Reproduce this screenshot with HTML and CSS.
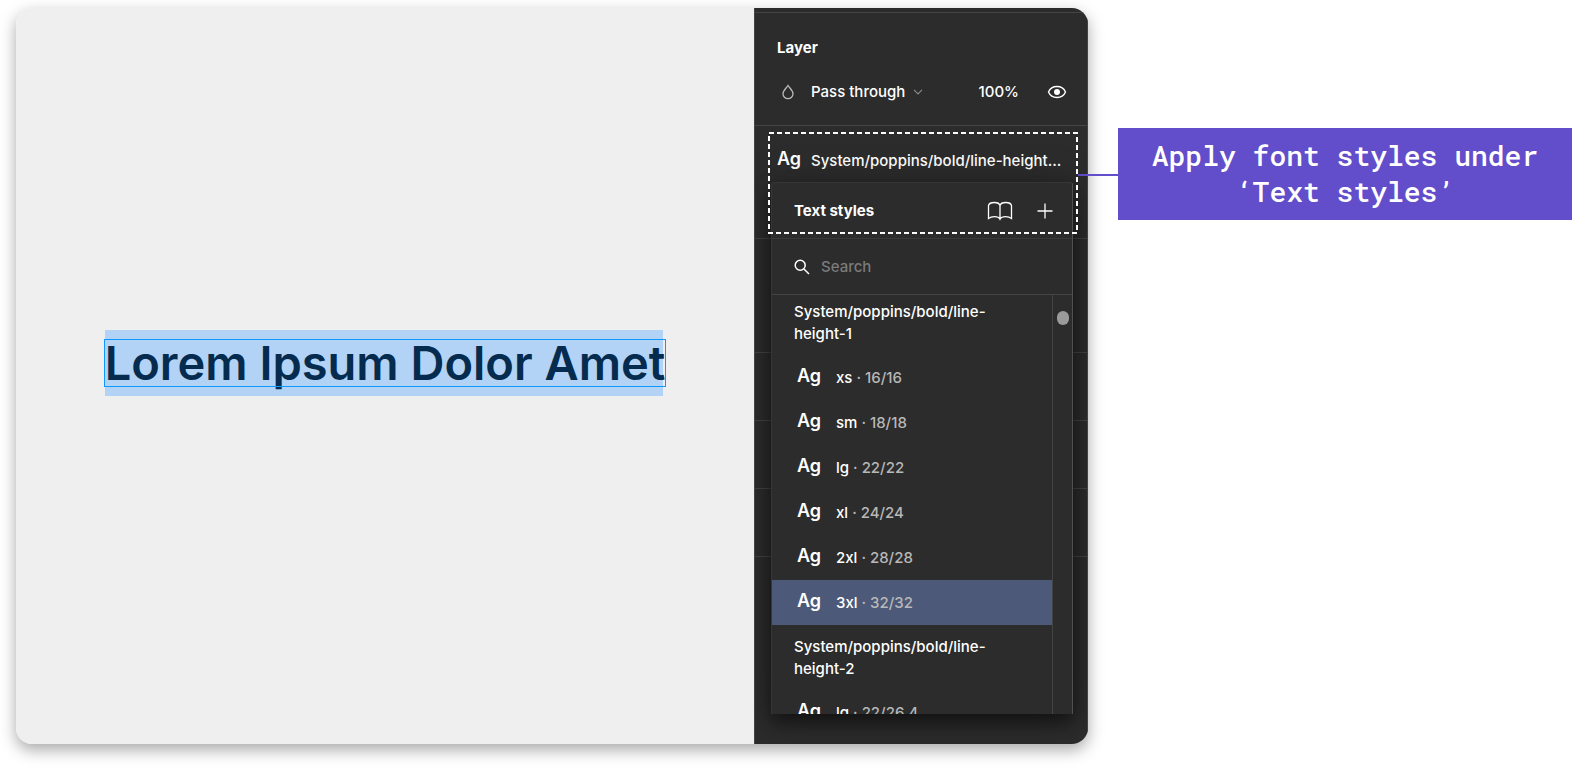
FILE: index.html
```html
<!DOCTYPE html>
<html lang="en">
<head>
<meta charset="utf-8">
<title>Text styles</title>
<link rel="stylesheet" href="styles.css">
</head>
<body>
<main class="page">
  <div class="editor">
    <section class="canvas">
      <h1 class="headline"><span class="headline-text">Lorem Ipsum Dolor Amet</span></h1>
    </section>
    <aside class="panel">
      <div class="panel-top"></div>
      <section class="section layer">
        <h2 class="title">Layer</h2>
        <div class="layer-row">
          <svg class="drop" viewBox="0 0 12 16" width="12" height="16"><path d="M6 1.5C4.500 4 1 6.500 1 9.700a5 5 0 0 0 10 0C11 6.500 7.500 4 6 1.500z"/></svg>
          <button class="blend" type="button">Pass through
            <svg class="chevron" viewBox="0 0 10 6" width="10" height="6"><path d="M1 .8l4 4 4-4"/></svg>
          </button>
          <span class="opacity">100%</span>
          <button class="icon-button" type="button" aria-label="Toggle visibility">
            <svg class="eye" viewBox="0 0 20 14" width="20" height="14"><path d="M1.500 7C3 3.500 6.200 1.500 10 1.500S17 3.500 18.500 7C17 10.500 13.800 12.500 10 12.500S3 10.500 1.500 7z"/><circle cx="10" cy="7" r="3"/></svg>
          </button>
        </div>
      </section>
      <section class="section style">
        <button class="style-current" type="button"><span class="ag">Ag</span><span class="style-name">System/poppins/bold/line-height...</span></button>
        <div class="popover">
          <header class="pop-header">
            <h2 class="title">Text styles</h2>
            <button class="icon-button" type="button" aria-label="Library">
              <svg class="stroke" viewBox="0 0 26 20" width="26" height="20"><path d="M13 4.500C12.500 2.500 10 1.500 7.300 1.500S2 2.500 1.500 4.500V17.500C3 16.300 5 15.700 7.500 15.700S12 16.200 13 18.200C14 16.200 16 15.700 18.500 15.700S23 16.300 24.500 17.500V4.500C24 2.500 21.400 1.500 18.700 1.500S13.500 2.500 13 4.500zM13 4.500V18"/></svg>
            </button>
            <button class="icon-button" type="button" aria-label="Create style">
              <svg class="stroke" viewBox="0 0 16 16" width="16" height="16"><path d="M8 .5v15M.5 8h15"/></svg>
            </button>
          </header>
          <label class="search">
            <svg class="magnifier" viewBox="0 0 16 16" width="16" height="16"><circle cx="6.200" cy="6.200" r="5"/><path d="M10 10l5 5"/></svg>
            <input class="search-input" type="text" placeholder="Search" aria-label="Search">
          </label>
          <div class="results">
            <div class="list">
              <h3 class="group">System/poppins/bold/line-height-1</h3>
              <button class="item" type="button"><span class="ag">Ag</span><span>xs <span class="meta">· 16/16</span></span></button>
              <button class="item" type="button"><span class="ag">Ag</span><span>sm <span class="meta">· 18/18</span></span></button>
              <button class="item" type="button"><span class="ag">Ag</span><span>lg <span class="meta">· 22/22</span></span></button>
              <button class="item" type="button"><span class="ag">Ag</span><span>xl <span class="meta">· 24/24</span></span></button>
              <button class="item" type="button"><span class="ag">Ag</span><span>2xl <span class="meta">· 28/28</span></span></button>
              <button class="item selected" type="button"><span class="ag">Ag</span><span>3xl <span class="meta">· 32/32</span></span></button>
              <h3 class="group later">System/poppins/bold/line-height-2</h3>
              <button class="item" type="button"><span class="ag">Ag</span><span>lg <span class="meta">· 22/26.4</span></span></button>
            </div>
            <div class="scrollbar"><div class="thumb"></div></div>
          </div>
        </div>
        <svg class="marker"><rect x="1" y="1"/></svg>
      </section>
      <section class="section tall"></section>
      <section class="section short"></section>
      <section class="section short"></section>
      <section class="section short"></section>
    </aside>
  </div>
  <p class="callout">Apply font styles under ‘Text styles’</p>
</main>
</body>
</html>
```
FILE: styles.css
```css
* { box-sizing: border-box; }

body {
  margin: 0;
  background: #fff;
  color: #fff;
  font: 500 15px/22px Inter, "Liberation Sans", sans-serif;
}

h1, h2, h3, p { margin: 0; }

button {
  margin: 0;
  padding: 0;
  border: 0;
  background: none;
  color: inherit;
  font: inherit;
  text-align: left;
}

svg { display: block; fill: none; }

.page {
  display: flex;
  align-items: flex-start;
  gap: 30px;
  min-height: 100vh;
  padding: 8px 0 24px 16px;
}

.editor {
  display: flex;
  flex: 1;
  min-height: calc(100vh - 32px);
  border-radius: 16px;
  overflow: hidden;
  box-shadow: 0 6px 16px rgba(0, 0, 0, .34);
}

.canvas {
  display: flex;
  flex: 1;
  align-items: center;
  justify-content: center;
  padding: 0 2px 26px 0;
  background: #efefef;
}

.headline {
  padding: 10px 0;
  background: #b2d3f5;
  color: #052b4f;
  font-size: 47px;
  font-weight: 600;
  line-height: 46px;
}

.headline-text {
  display: block;
  margin: 0 -2px 0 0;
  outline: 1px solid #0d99ff;
  white-space: nowrap;
}

.panel {
  position: relative;
  flex: none;
  width: 334px;
  border-left: 1px solid #444;
  border-right: 1px solid #444;
  background: #2c2c2c;
  overflow: hidden;
}

.panel-top { height: 5px; border-bottom: 1px solid #444; }
.section { border-bottom: 1px solid #444; }
.layer { height: 113px; padding: 24px 20px 0 22px; }
.style { position: relative; height: 113px; padding: 23px 22px 0; }
.tall { height: 114px; }
.short { height: 68px; }

.title { font-size: 15px; font-weight: 700; line-height: 22px; }

.layer-row { display: flex; align-items: center; margin-top: 22px; }
.drop { margin-left: 5px; stroke: #bbb; stroke-width: 1.3; }
.blend { display: flex; flex: 1; align-items: center; gap: 8px; margin-left: 17px; }
.chevron { stroke: #888; stroke-width: 1.2; }
.opacity { margin-right: 28px; }
.eye path { stroke: #fff; stroke-width: 1.4; }
.eye circle { fill: #fff; }
.stroke { stroke: #fff; stroke-width: 1.3; }

.style-current { display: flex; align-items: center; gap: 10px; width: 100%; }
.ag { flex: none; width: 24px; padding-bottom: 3px; font-size: 18px; font-weight: 600; line-height: 20px; }
.style-name { white-space: nowrap; }

.popover {
  position: absolute;
  z-index: 1;
  top: 56px;
  left: 16px;
  width: 302px;
  border: 1px solid #363636;
  border-right-color: #505050;
  border-bottom-width: 0;
  border-radius: 3px 3px 0 0;
  background: #2c2c2c;
  box-shadow: 0 8px 18px rgba(0, 0, 0, .5), 0 4px 40px rgba(0, 0, 0, .25);
}

.pop-header { display: flex; align-items: center; gap: 24px; height: 55px; padding: 0 19px 0 22px; }
.pop-header .title { flex: 1; }

.search {
  display: flex;
  align-items: center;
  gap: 11px;
  height: 57px;
  padding: 0 22px;
  border-top: 1px solid #3a3a3a;
  border-bottom: 1px solid #444;
}
.magnifier { stroke: #fff; stroke-width: 1.5; }
.search-input { flex: 1; min-width: 0; padding: 0; border: 0; outline: 0; background: none; color: #fff; font: inherit; }
.search-input::placeholder { color: #7b7b7b; opacity: 1; }

.results { display: flex; height: 419px; overflow: hidden; }
.list { flex: 1; min-width: 0; }
.group { padding: 6px 48px 10px 22px; font-size: 15px; font-weight: 500; line-height: 22px; }
.later { padding-top: 11px; }
.item { display: flex; align-items: center; gap: 14px; width: 100%; height: 45px; padding-left: 25px; }
.item .ag { width: 25px; }
.selected { background: #4c5978; }
.meta { color: #b8b8b8; }
.scrollbar { width: 20px; padding: 16px 2px 16px 4px; border-left: 1px solid #444; }
.thumb { width: 12px; height: 14px; border-radius: 6px; background: #9a9a9a; }

.marker { position: absolute; z-index: 2; top: 6px; left: 13px; width: 310px; height: 102px; pointer-events: none; }
.marker rect { width: calc(100% - 2px); height: calc(100% - 2px); stroke: #fff; stroke-width: 2; stroke-dasharray: 5 3; }

.callout {
  position: relative;
  flex: none;
  width: 454px;
  margin-top: 120px;
  padding: 10px 32px;
  background: #624dcb;
  font: 500 28px/36px "Roboto Mono", "DejaVu Sans Mono", monospace;
  text-align: center;
}
.callout::before {
  content: "";
  position: absolute;
  top: 46px;
  right: 100%;
  width: 40px;
  height: 2px;
  background: #624dcb;
}
```
